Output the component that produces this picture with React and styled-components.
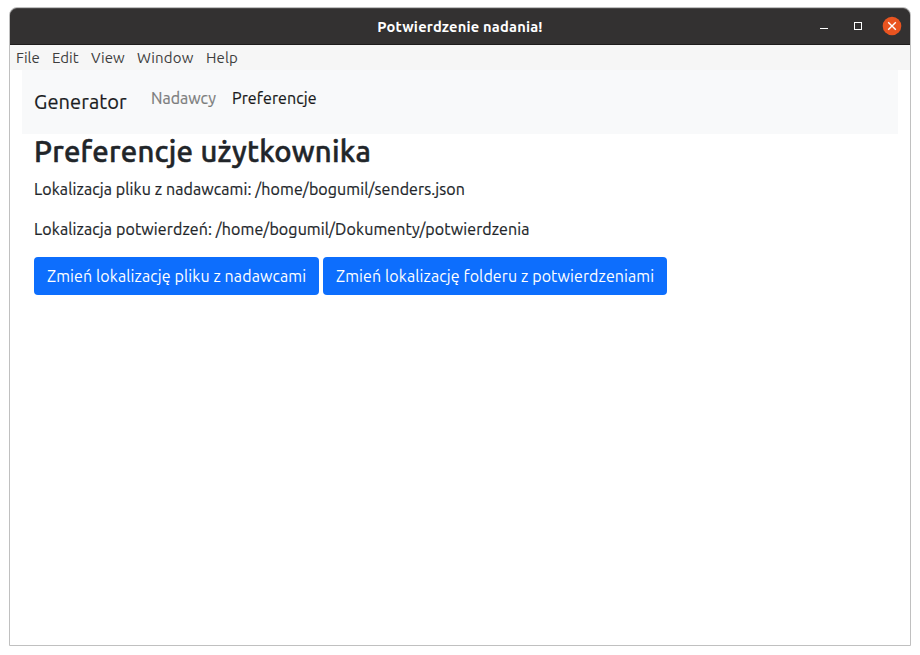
import React from 'react';
import styled, { createGlobalStyle } from 'styled-components';

const Global = createGlobalStyle`
  *, *::before, *::after { box-sizing: border-box; }
  html, body { margin: 0; background: #fff; }
  body {
    font-family: Ubuntu, "Open Sans", "Noto Sans", sans-serif;
    font-size: 16px;
    line-height: 24px;
    color: #212529;
  }
`;

const Desktop = styled.div`
  width: 920px;
  height: 655px;
  padding: 7px 9px 9px 9px;
  overflow: hidden;
`;

const Window = styled.div`
  width: 902px;
  height: 639px;
  display: flex;
  flex-direction: column;
  border: 1px solid #c0c0c0;
  border-radius: 8px 8px 0 0;
  background: #fff;
`;

const TitleBar = styled.header`
  height: 37px;
  flex: none;
  display: grid;
  grid-template-columns: 110px 1fr 110px;
  align-items: center;
  background: #333131;
  border-top: 1px solid #4a4848;
  border-bottom: 1px solid #1e1c1c;
  border-radius: 7px 7px 0 0;
`;

const Title = styled.h1`
  grid-column: 2;
  margin: 0;
  text-align: center;
  white-space: nowrap;
  color: #fff;
  font-size: 14.67px;
  line-height: 20px;
  font-weight: 700;
  letter-spacing: 0.2px;
`;

const Controls = styled.div`
  display: flex;
  align-items: center;
  justify-content: flex-end;
  padding: 0 8px 1px 0;
`;

const WindowButton = styled.button`
  width: 34px;
  height: 20px;
  flex: none;
  display: flex;
  align-items: center;
  justify-content: center;
  padding: 0;
  border: 0;
  background: none;
`;

const CloseButton = styled(WindowButton)`
  width: 20px;
  margin-left: 7px;
`;

const MenuBar = styled.nav`
  height: 25px;
  flex: none;
  display: flex;
  gap: 12px;
  padding: 3px 0 0 6px;
  background: #f6f6f6;
  color: #3d3d3d;
  font-size: 15px;
  line-height: 20px;
`;

const MenuItem = styled.div`
  width: ${(p) => p.$w}px;
  white-space: nowrap;
  letter-spacing: ${(p) => p.$spacing || 0}px;
`;

const Container = styled.main`
  padding: 0 12px;
`;

const NavBar = styled.nav`
  height: 64px;
  display: flex;
  padding: 0 12px;
  background: #f8f9fa;
`;

const Brand = styled.div`
  width: 93px;
  margin-right: 24px;
  padding-top: 17px;
  font-size: 20px;
  line-height: 30px;
  letter-spacing: 0.12px;
  color: #1a1c1e;
  -webkit-text-stroke: 0.2px;
`;

const NavLink = styled.div`
  padding-top: 16px;
  margin-right: 16px;
  letter-spacing: ${(p) => p.$spacing || 0}px;
  color: ${(p) => (p.$active ? '#19191a' : '#7c7d7d')};
  -webkit-text-stroke: 0.2px;
`;

const Content = styled.section`
  padding: 0 12px;
`;

const Heading = styled.h2`
  margin: 0 0 8px;
  font-size: 29.3px;
  font-weight: 500;
  line-height: 35px;
  letter-spacing: 0.26px;
  -webkit-text-stroke: 0.5px;
`;

const Paragraph = styled.p`
  margin: 0 0 16px;
  white-space: nowrap;
  letter-spacing: ${(p) => p.$spacing}px;
  -webkit-text-stroke: 0.2px;
`;

const Buttons = styled.div`
  display: flex;
  gap: 4px;
`;

const Button = styled.button`
  width: ${(p) => p.$w}px;
  height: 38px;
  padding: 0 0 0 13px;
  border: 0;
  border-radius: 4px;
  background: #0d6efd;
  color: #fff;
  font: inherit;
  letter-spacing: 0.1px;
  text-align: left;
  white-space: nowrap;
`;

const MENU = [
  ['File', 24, 0],
  ['Edit', 27, 0],
  ['View', 34, 0],
  ['Window', 57, 0.15],
  ['Help', 32, 0.1],
];

export default function App() {
  return (
    <Desktop>
      <Global />
      <Window>
        <TitleBar>
          <Title>Potwierdzenie nadania!</Title>
          <Controls>
            <WindowButton aria-label="Minimize">
              <svg width="10" height="10" viewBox="0 0 10 10" shapeRendering="crispEdges">
                <rect x="1" y="7" width="8" height="1" fill="#fff" />
              </svg>
            </WindowButton>
            <WindowButton aria-label="Maximize">
              <svg width="10" height="10" viewBox="0 0 10 10" shapeRendering="crispEdges">
                <rect x="1.5" y="1.5" width="7" height="7" fill="none" stroke="#fff" />
              </svg>
            </WindowButton>
            <CloseButton aria-label="Close">
              <svg width="20" height="20" viewBox="0 0 20 20">
                <circle cx="10" cy="10" r="9.3" fill="#e95420" />
                <path d="M6.2 6.2l7.6 7.6m0-7.6l-7.6 7.6" stroke="#fff" strokeWidth="1.4" />
              </svg>
            </CloseButton>
          </Controls>
        </TitleBar>
        <MenuBar>
          {MENU.map(([label, w, spacing]) => (
            <MenuItem key={label} $w={w} $spacing={spacing}>{label}</MenuItem>
          ))}
        </MenuBar>
        <Container>
          <NavBar>
            <Brand>Generator</Brand>
            <NavLink>Nadawcy</NavLink>
            <NavLink $active $spacing={0.12}>Preferencje</NavLink>
          </NavBar>
          <Content>
            <Heading>Preferencje użytkownika</Heading>
            <Paragraph $spacing={0.1}>Lokalizacja pliku z nadawcami: /home/bogumil/senders.json</Paragraph>
            <Paragraph $spacing={0.11}>Lokalizacja potwierdzeń: /home/bogumil/Dokumenty/potwierdzenia</Paragraph>
            <Buttons>
              <Button $w={285}>Zmień lokalizację pliku z nadawcami</Button>
              <Button $w={344}>Zmień lokalizację folderu z potwierdzeniami</Button>
            </Buttons>
          </Content>
        </Container>
      </Window>
    </Desktop>
  );
}
